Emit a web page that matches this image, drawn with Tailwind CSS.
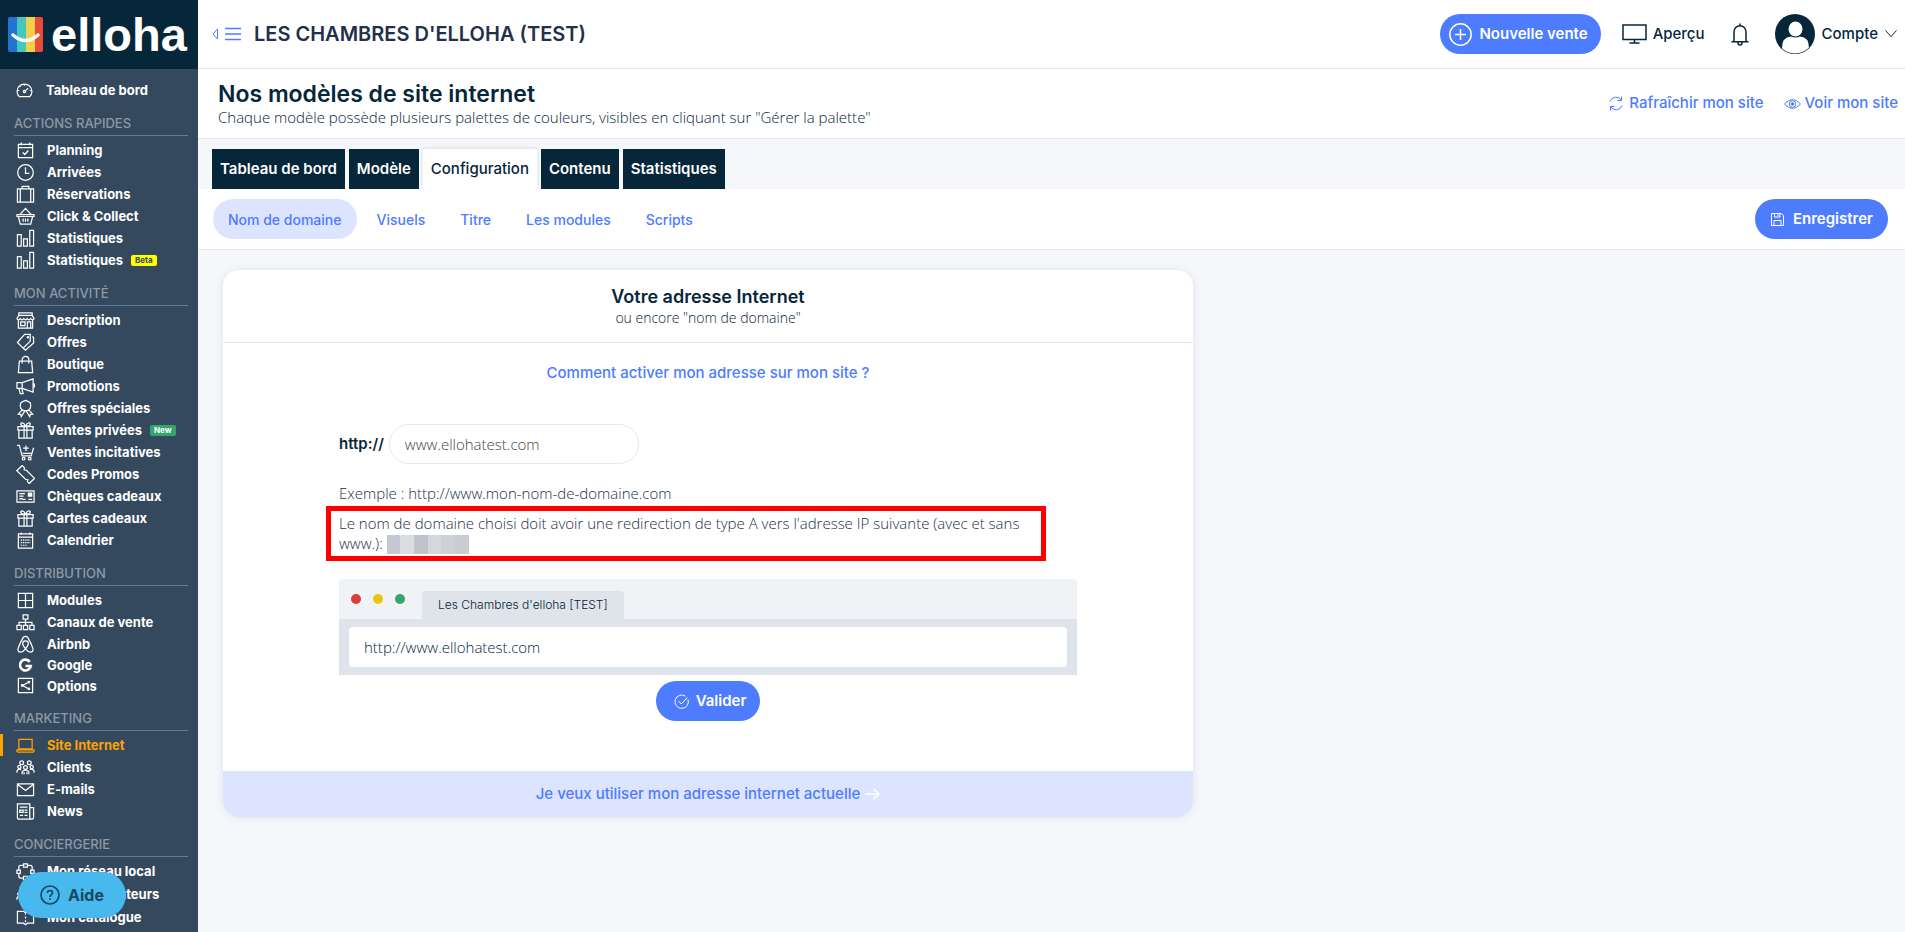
<!doctype html>
<html lang="fr">

<head>
  <meta charset="UTF-8">
  <meta name="viewport" content="width=device-width, initial-scale=1.0">
  <title>Nos modèles de site internet</title>
  <script src="https://cdn.jsdelivr.net/npm/@tailwindcss/browser@4"></script>
</head>

<body class="flex h-screen overflow-hidden bg-[#f6f7fb] font-['Inter',sans-serif] text-[#06263a]">
  <!-- icon sprite -->
  <svg class="hidden" fill="none">
    <symbol id="gauge" viewBox="0 0 20 20"><path d="M4.500 16.500a7.800 7.800 0 1 1 11 0zM10 3v2M4.800 5l1 1M3 10h1.500M17 10h-1.500M10 11l4-3.500" /><circle cx="10" cy="11" r="1.200" /></symbol>
    <symbol id="planning" viewBox="0 0 20 20"><path d="M2.500 3.500h15v14h-15zM2.500 7h15M5.500 1.500v3M14.500 1.500v3M7 12l2.200 2.200L13 10" /></symbol>
    <symbol id="clock" viewBox="0 0 20 20"><circle cx="10" cy="10" r="8.200" /><path d="M10 4.500V11h4" /></symbol>
    <symbol id="suitcase" viewBox="0 0 20 20"><path d="M1.500 4h17v14h-17zM4.500 4v14M15.500 4v14M6.500 4V1.500h7V4" /></symbol>
    <symbol id="basket" viewBox="0 0 20 20"><path d="M1 8h18v2H1zM2.500 10l2 8h11l2-8M4 8l6-6.500L16 8M7.500 12v3.500M10 12v3.500M12.500 12v3.500" /></symbol>
    <symbol id="stats" viewBox="0 0 20 20"><path d="M1.500 6h4v12h-4zM8 10.500h4V18H8zM14.500 1.500h4V18h-4z" /></symbol>
    <symbol id="store" viewBox="0 0 20 20"><path d="M3 2h14v2.500H3zM3 4.500 1 8q1.500 2.500 3.500 0 1.800 2.500 3.700 0 1.800 2.500 3.600 0 1.800 2.500 3.700 0Q17.500 10.500 19 8l-2-3.500M2.500 10v8h15v-8M12 18v-6.500h3.500V18M5 11.500h4.500v4H5z" /></symbol>
    <symbol id="tags" viewBox="0 0 20 20"><path d="M9 1.500h6v7L7.500 16 1.500 10zM17 4l1.500.500v6L10 18l-2.500-2" /><circle cx="12.500" cy="4.500" r=".6" /></symbol>
    <symbol id="bag" viewBox="0 0 20 20"><path d="M3.500 6.500h13l1 12h-15zM6.500 9V5a3.500 3.500 0 0 1 7 0v4" /></symbol>
    <symbol id="megaphone" viewBox="0 0 20 20"><path d="M1 6h5.500v6H1zM6.500 6 18 2v14L6.500 12M3 12l1.500 5.500h3L6 12M18 7.500h1.500v3H18" /></symbol>
    <symbol id="medal" viewBox="0 0 20 20"><path d="m10 1.500 2.500 1 2.500 1.500.500 3-.5 3-2.500 2-2.500.5-2.500-.5-2.500-2-.5-3 .5-3L7.500 2.500zM6.500 11.500 2.500 16l2.500.200L5.500 18.500 9 13M13.500 11.500l4 4.500-2.500.200-.5 2.300L11 13" /></symbol>
    <symbol id="gift" viewBox="0 0 20 20"><path d="M2 6h16v3.500H2zM3 9.500h14V18H3zM8.500 6v12M11.500 6v12M10 5.500C8 1 4.500 1.500 5 3.500c.3 1.500 3 2 5 2 2 0 4.700-.5 5-2 .5-2-3-2.500-5 2" /></symbol>
    <symbol id="cart" viewBox="0 0 20 20"><path d="M1 2.500h2.500l3 11h9.500l2.500-8.500M7 11h9.500M10.500 2.500v6M7.500 5.500h6" /><circle cx="8" cy="16.500" r="1.400" /><circle cx="14.500" cy="16.500" r="1.400" /></symbol>
    <symbol id="ticket" viewBox="0 0 20 20"><path d="M6.500.500 9 3l-.5 2 2.500.500 8.500 8.500-5.500 5.500-2-2 .5-2-2.500-.5L.800 6z" /></symbol>
    <symbol id="cheque" viewBox="0 0 20 20"><path d="M1 4h18v12H1zM3.500 7h6M3.500 9.500h4.500M3.500 13l2-1 1.500 1H10M13 13h4" /><path fill="currentColor" d="M13 6.500h3.500v3H13z" /></symbol>
    <symbol id="calendar" viewBox="0 0 20 20"><path d="M5.500 1.500V4M14.500 1.500V4" /><path d="M5 9.500h10M5 12.200h10M5 15h7" stroke-dasharray="1.500 .8" /><path d="M2.500 3h15v15h-15zM2.500 6.500h15" /></symbol>
    <symbol id="grid" viewBox="0 0 20 20"><path d="M2.500 2.500h15v15h-15zM10 2.500v15M2.500 10h15" /></symbol>
    <symbol id="tree" viewBox="0 0 20 20"><path d="M7.500 2h5v4.500h-5zM1 13h4.500v4.500H1zM7.800 13h4.500v4.500H7.800zM14.500 13H19v4.500h-4.500zM10 6.500V13M3.200 13V9.800h13.600V13" /></symbol>
    <symbol id="airbnb" viewBox="0 0 20 20"><path d="M10 14.500c-2-2.300-3-3.700-3-5.200a3 3 0 0 1 6 0c0 1.500-1 2.900-3 5.200-1.800 2.300-3.500 3.500-5.200 3.500-2 0-3.300-1.700-2.600-3.900C3 11.700 6.500 4.500 7.500 2.800c1.200-1.700 3.800-1.700 5 0 1 1.700 4.500 8.900 5.300 11.300.7 2.200-.6 3.900-2.600 3.900-1.700 0-3.400-1.200-5.200-3.500z" /></symbol>
    <symbol id="google" viewBox="0 0 20 20"><path stroke-width="2.800" d="M14.500 6.200A5.700 5.700 0 1 0 15.500 10.500H10" /></symbol>
    <symbol id="share" viewBox="0 0 20 20"><path d="M2.500 2.500h15v15h-15zM13 6.500 7 10l6 3.500" /><g fill="currentColor"><circle cx="13.500" cy="6.500" r=".8" /><circle cx="6.500" cy="10" r=".8" /><circle cx="13.500" cy="13.500" r=".8" /></g></symbol>
    <symbol id="laptop" viewBox="0 0 20 20"><path d="M3 3.500h14v10H3zM1 14.500h18v1.500l-1 1H2l-1-1z" /></symbol>
    <symbol id="people" viewBox="0 0 20 20"><circle cx="6" cy="5" r="2" /><circle cx="14" cy="5" r="2" /><circle cx="10" cy="10" r="2" /><circle cx="3.500" cy="9.500" r="1.700" /><circle cx="16.500" cy="9.500" r="1.700" /><path d="M6.500 17v-2.500q3.500-3.500 7 0V17M1 15.500v-2q2.500-3 4.500-1M19 15.500v-2q-2.500-3-4.500-1M8.500 17v-2M11.500 17v-2" /></symbol>
    <symbol id="mail" viewBox="0 0 20 20"><path d="M1.500 4h17v12.500h-17zM1.500 4.500 10 11l8.500-6.500" /></symbol>
    <symbol id="news" viewBox="0 0 20 20"><path d="M1.500 2h13v14.500q0 1.500 2 1.500H3q-1.500 0-1.500-1.500zM14.500 6h4v10.500q0 1.500-2 1.500M4 5.500h8M4 8.500h3.500V11H4zM9 8.500h3M9 11h3M4 14h3.500M9 14h3" /></symbol>
    <symbol id="network" viewBox="0 0 20 20"><path d="M8 2h4v3.500H8zM8 15h4v3.500H8zM1 8.500h3.500V12H1zM15.500 8.500H19V12h-3.500zM3 8V4.500Q3 3.500 5 3.500h3M12 3.500h3q2 0 2 1.500v3M3 12v3q0 2 2 2h3M12 17h3q2 0 2-2v-3" /></symbol>
    <symbol id="book" viewBox="0 0 20 20"><path d="M1.500 3.500H8l2 1.500 2-1.500h6.500V16H12l-2 1.500L8 16H1.500zM10 5v2M10 9v2M10 13v2" /></symbol>
  </svg>

  <aside class="flex w-[198px] shrink-0 flex-col bg-[#34495e] text-white">
    <a href="#" class="flex h-[69px] shrink-0 items-center gap-2 bg-[#06263a] pl-2" aria-label="elloha">
      <svg class="size-[35px] shrink-0" viewBox="0 0 35 35">
        <clipPath id="logo"><rect width="35" height="35" rx="2" /></clipPath>
        <g clip-path="url(#logo)">
          <path fill="#2274d0" d="M0 0h9v35H0z" />
          <path fill="#43c8bf" d="M9 0h9v35H9z" />
          <path fill="#f5cf4b" d="M18 0h9v35h-9z" />
          <path fill="#ea4b37" d="M27 0h8v35h-8z" />
        </g>
        <path d="M5 18q12.500 11 25 0" fill="none" stroke="#fff" stroke-width="3.500" stroke-linecap="round" />
      </svg>
      <span class="font-['Liberation_Sans',sans-serif] text-[47px] leading-none font-bold">elloha</span>
    </a>

    <nav id="menu" class="text-[13px] font-bold">
      <a href="#" class="mt-[10px] flex h-[22px] items-center gap-3 pl-[15px]"><svg class="size-[19px] fill-none stroke-current stroke-[1.3]"><use href="#gauge" /></svg><span class="pt-[2px]">Tableau de bord</span></a>
    </nav>
  </aside>

  <main class="flex min-w-0 grow flex-col">
    <header class="flex h-[69px] shrink-0 items-center border-b border-[#e6e7ef] bg-white pr-2 pl-[14px]">
      <button class="text-[#4d7cff]" aria-label="Replier le menu">
        <svg width="30" height="14" viewBox="0 0 30 14" fill="none" stroke="currentColor"><path d="M5.500 2v10L1 7z" /><path stroke-width="1.500" d="M13 1.500h16M13 7h16M13 12.500h16" /></svg>
      </button>
      <h1 class="ml-3 grow text-[20px] font-semibold text-[#22304a]">LES CHAMBRES D'ELLOHA (TEST)</h1>
      <button class="flex h-10 items-center gap-[7px] rounded-full bg-[#4d7cff] pr-[13px] pl-[9px] text-[15px] font-semibold text-white">
        <svg width="23" height="23" viewBox="0 0 23 23" fill="none" stroke="currentColor" stroke-width="1.500"><circle cx="11.500" cy="11.500" r="10.700" /><path d="M11.500 6v11M6 11.500h11" /></svg>
        Nouvelle vente
      </button>
      <a href="#" class="ml-[21px] flex items-center gap-[6px] text-[15px] font-medium">
        <svg width="25" height="20" viewBox="0 0 25 20" fill="none" stroke="currentColor" stroke-width="1.500"><path d="M1 1h23v14.500H1zM12.500 15.500V19M7.500 19h10" /></svg>
        Aperçu
      </a>
      <button class="ml-[26px]" aria-label="Notifications">
        <svg width="18" height="23" viewBox="0 0 18 23" fill="none" stroke="currentColor" stroke-width="1.500"><path d="M9 .500V2.500M.500 18.800h17M3 18.500V9a6 6.300 0 0 1 12 0v9.500M7 19v1a2 2 0 0 0 4 0v-1" /></svg>
      </button>
      <button class="ml-[26px] flex items-center gap-[7px] text-[15px] font-medium">
        <svg width="40" height="40" viewBox="0 0 40 40"><clipPath id="round"><circle cx="20" cy="20" r="19.500" /></clipPath><circle cx="20" cy="20" r="20" fill="#06263a" /><g fill="#fff" clip-path="url(#round)"><ellipse cx="20.500" cy="15" rx="7" ry="7.500" /><path d="M7 40v-6q0-11 9-11.500 4.500 2 9 0 9 .500 9 11.500v6z" /></g></svg>
        Compte
        <svg width="12" height="8" viewBox="0 0 12 8" fill="none" stroke="currentColor"><path d="m.5.500 5.500 6 5.500-6" /></svg>
      </button>
    </header>

    <section class="flex h-[70px] shrink-0 items-center border-b border-[#e6e7ef] bg-white pr-[7px] pl-5">
      <div class="grow pb-[2px]">
        <h2 class="text-[23px] leading-[28px] font-semibold">Nos modèles de site internet</h2>
        <p class="font-['Open_Sans',sans-serif] text-[15px] leading-[18px] font-light">Chaque modèle possède plusieurs palettes de couleurs, visibles en cliquant sur "Gérer la palette"</p>
      </div>
      <div class="flex gap-5 text-[15px] font-medium text-[#4d7cff]">
        <a href="#" class="flex items-center gap-[6px]">
          <svg width="14" height="15" viewBox="0 0 14 15" fill="none" stroke="currentColor"><path d="M1 5.500a6.300 6.300 0 0 1 11.500-1M12.500.500v4h-4M13 9.500a6.300 6.300 0 0 1-11.500 1M1.500 14.500v-4h4" /></svg>
          Rafraîchir mon site
        </a>
        <a href="#" class="flex items-center gap-1">
          <svg width="17" height="10" viewBox="0 0 17 10" fill="none" stroke="currentColor"><path d="M.500 5q8-9 16 0-8 9-16 0z" /><circle cx="8.500" cy="5" r="3.300" /><circle cx="8.500" cy="5" r="1.300" fill="currentColor" /></svg>
          Voir mon site
        </a>
      </div>
    </section>

    <nav class="flex shrink-0 gap-1 pt-[10px] pl-[14px] text-[15px] font-semibold text-white">
      <a href="#" class="flex h-10 items-center bg-[#06263a] px-2">Tableau de bord</a>
      <a href="#" class="flex h-10 items-center bg-[#06263a] px-2">Modèle</a>
      <a href="#" class="flex h-10 items-center bg-white px-2 font-medium text-[#06263a] shadow-[0_-1px_4px_rgba(0,0,0,0.1)]">Configuration</a>
      <a href="#" class="flex h-10 items-center bg-[#06263a] px-2">Contenu</a>
      <a href="#" class="flex h-10 items-center bg-[#06263a] px-2">Statistiques</a>
    </nav>

    <div class="relative flex h-[61px] shrink-0 items-center border-b border-[#e6e7ef] bg-white pr-[17px] pl-[15px]">
      <nav class="flex grow gap-[5px] text-[14px] font-medium text-[#4d7cff]">
        <a href="#" class="flex h-10 items-center rounded-full bg-[#dde4ff] px-[15px]">Nom de domaine</a>
        <a href="#" class="flex h-10 items-center px-[15px]">Visuels</a>
        <a href="#" class="flex h-10 items-center px-[15px]">Titre</a>
        <a href="#" class="flex h-10 items-center px-[15px]">Les modules</a>
        <a href="#" class="flex h-10 items-center px-[15px]">Scripts</a>
      </nav>
      <button class="flex h-10 items-center gap-[9px] rounded-full bg-[#4d7cff] pr-[15px] pl-4 text-[15px] font-semibold text-white">
        <svg width="13" height="13" viewBox="0 0 13 13" fill="none" stroke="currentColor"><path d="M.500.500h10l2 2v10H.500zM3.500.500v3.500h5.500V.500M7 1v2M3 12.500V7.500h7v5" /></svg>
        Enregistrer
      </button>
    </div>

    <section class="mt-5 mr-6 ml-[25px] max-w-[970px] overflow-hidden rounded-2xl bg-white shadow-[0_0_8px_rgba(30,50,90,0.1)]">
      <div class="border-b border-[#e6e7ef] pt-[15px] pb-[15px] text-center">
        <h3 class="text-[18px] leading-6 font-semibold">Votre adresse Internet</h3>
        <p class="font-['Open_Sans',sans-serif] text-[14px] leading-[18px] font-light">ou encore "nom de domaine"</p>
      </div>

      <form class="px-[116px] pt-5 pb-[50px]">
        <a href="#" class="block text-center text-[15px] leading-5 font-medium text-[#4d7cff]">Comment activer mon adresse sur mon site ?</a>
        <div class="mt-[41px] flex items-center gap-[5px] text-[15px]">
          <label for="domain" class="font-semibold">http://</label>
          <input id="domain" type="text" value="www.ellohatest.com" class="h-10 w-[250px] rounded-full border border-[#e6e7ef] px-[15px] font-['Open_Sans',sans-serif] font-light text-[#444]">
        </div>
        <p class="mt-[19px] font-['Open_Sans',sans-serif] text-[15px] leading-5 font-light text-[#22304a]">Exemple : http://www.mon-nom-de-domaine.com</p>

        <div class="mt-[3px] -ml-[13px] w-[720px] border-[5px] border-[#ff0000] py-[2px] pl-2 font-['Open_Sans',sans-serif] text-[15px] leading-5 font-light text-[#22304a]">
          Le nom de domaine choisi doit avoir une redirection de type A vers l'adresse IP suivante (avec et sans<br>www.):
          <span class="inline-flex h-[19px] w-[82px] align-middle">
            <span class="grow bg-[#c5c8d2]"></span><span class="grow bg-[#dbdce0]"></span><span class="grow bg-[#bfc3cc]"></span><span class="grow bg-[#d4d7dc]"></span><span class="grow bg-[#cdd0d6]"></span><span class="grow bg-[#c9ccd2]"></span>
          </span>
        </div>

        <!-- browser preview -->
        <div class="mt-[18px] overflow-hidden rounded-t-sm">
          <div class="flex h-10 items-end bg-[#eff3f6] pl-3">
            <span class="mb-[15px] flex gap-3">
              <i class="size-[10px] rounded-full bg-[#dc3c3c]"></i>
              <i class="size-[10px] rounded-full bg-[#eac50f]"></i>
              <i class="size-[10px] rounded-full bg-[#34a56f]"></i>
            </span>
            <span class="ml-[17px] rounded-t-sm bg-[#dfe3ea] px-4 py-1 text-[12px] leading-5 font-light">Les Chambres d'elloha [TEST]</span>
          </div>
          <div class="bg-[#dfe3ea] px-[10px] py-2">
            <input type="text" readonly value="http://www.ellohatest.com" aria-label="Adresse du site" class="h-10 w-full rounded-sm bg-white px-[15px] font-['Open_Sans',sans-serif] text-[15px] font-light">
          </div>
        </div>

        <button type="button" class="mx-auto mt-[6px] flex h-10 items-center gap-[7px] rounded-full bg-[#4d7cff] pr-[14px] pl-[18px] text-[15px] font-semibold text-white">
          <svg width="15" height="15" viewBox="0 0 15 15" fill="none" stroke="currentColor"><path d="M14 5.500A6.700 6.700 0 1 1 11.500 2.200M4.500 7 7.300 10l6-6.500" /></svg>
          Valider
        </button>
      </form>

      <a href="#" class="flex h-[46px] items-center justify-center gap-[5px] bg-[#dde4ff] text-[15px] font-medium text-[#4d7cff]">
        Je veux utiliser mon adresse internet actuelle
        <svg width="15" height="12" viewBox="0 0 15 12" fill="none" stroke="#fff" stroke-width="1.300"><path d="M0 6h14M8.500.800 14 6l-5.500 5.200" /></svg>
      </a>
    </section>
  </main>

  <button class="fixed bottom-[14px] left-[18px] flex h-[46px] items-center gap-2 rounded-full bg-[#47b9ee] px-[22px] text-[16px] font-bold text-[#17495f]">
    <svg width="20" height="20" viewBox="0 0 20 20" fill="none" stroke="currentColor" stroke-width="1.700"><circle cx="10" cy="10" r="9" /><path d="M7.500 8q0-2.500 2.500-2.500T12.500 8q0 1-1.200 1.800T10 12M10 13.300v1.700" /></svg>
    Aide
  </button>

  <script>
    const sections = [
      ['ACTIONS RAPIDES', [['planning', 'Planning'], ['clock', 'Arrivées'], ['suitcase', 'Réservations'], ['basket', 'Click & Collect'], ['stats', 'Statistiques'], ['stats', 'Statistiques', 'Beta']]],
      ['MON ACTIVITÉ', [['store', 'Description'], ['tags', 'Offres'], ['bag', 'Boutique'], ['megaphone', 'Promotions'], ['medal', 'Offres spéciales'], ['gift', 'Ventes privées', 'New'], ['cart', 'Ventes incitatives'], ['ticket', 'Codes Promos'], ['cheque', 'Chèques cadeaux'], ['gift', 'Cartes cadeaux'], ['calendar', 'Calendrier']]],
      ['DISTRIBUTION', [['grid', 'Modules'], ['tree', 'Canaux de vente'], ['airbnb', 'Airbnb'], ['google', 'Google'], ['share', 'Options']]],
      ['MARKETING', [['laptop', 'Site Internet'], ['people', 'Clients'], ['mail', 'E-mails'], ['news', 'News']]],
      ['CONCIERGERIE', [['network', 'Mon réseau local'], ['people', 'Mes distributeurs'], ['book', 'Mon catalogue']]],
    ];
    const badges = {
      Beta: 'bg-[#ffff00] text-[#34495e]',
      New: 'bg-[#34a56f] text-white',
    };
    // rows that are not 22px high
    const heights = {
      Google: 'h-5',
      Options: 'h-[21px]',
      'Mes distributeurs': 'h-6',
    };
    const menu = document.getElementById('menu');

    sections.forEach(([title, items]) => {
      const heading = document.createElement('h4');
      heading.className = 'mr-[10px] mb-[3px] ml-[14px] flex h-[35px] items-end border-b border-[#5f7a99] pb-[2px] font-medium text-[#8d99a6]';
      heading.textContent = title;
      menu.appendChild(heading);

      items.forEach(([icon, label, badge]) => {
        const link = document.createElement('a');
        const height = heights[label] || 'h-[22px]';
        const color = icon === 'laptop' ? 'border-[#ffa200] text-[#ffa200]' : 'border-transparent';
        link.href = '#';
        link.className = `flex items-center gap-3 border-l-[3px] pl-[13px] whitespace-nowrap ${height} ${color}`;
        link.innerHTML = `<svg class="size-[19px] shrink-0 fill-none stroke-current stroke-[1.3]"><use href="#${icon}" /></svg><span class="pt-[2px]">${label}</span>`;
        if (badge) {
          link.innerHTML += `<span class="-ml-1 rounded-xs px-1 text-[8px] leading-[11px] ${badges[badge]}">${badge}</span>`;
        }
        menu.appendChild(link);
      });
    });
  </script>
</body>

</html>
